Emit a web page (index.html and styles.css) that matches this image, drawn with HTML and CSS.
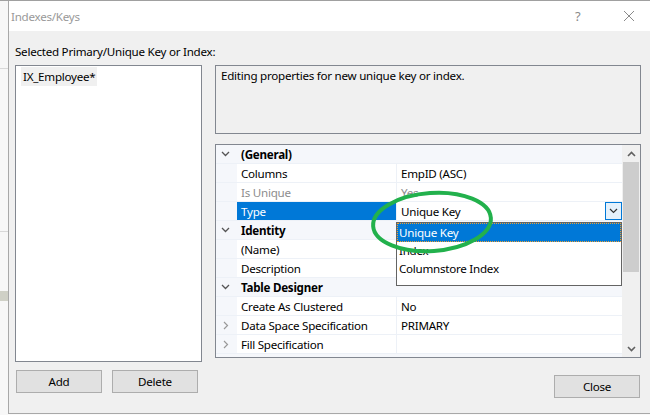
FILE: index.html
```html
<!DOCTYPE html>
<html>
<head>
<meta charset="utf-8">
<link rel="stylesheet" href="styles.css">
</head>
<body>
<div class="screen">
  <div class="bgstrip">
    <div class="bgline l1"></div>
    <div class="bgline l2"></div>
    <div class="bgline l3"></div>
  </div>
  <div class="window">
    <div class="titlebar">
      <span class="title">Indexes/Keys</span>
      <span class="tb-help">?</span>
      <span class="tb-close"><svg width="12" height="12" viewBox="0 0 12 12"><path d="M1 1 L11 11 M11 1 L1 11" stroke="#8a8a8a" stroke-width="1" fill="none"/></svg></span>
    </div>
    <div class="client">
      <div class="label">Selected Primary/Unique Key or Index:</div>
      <div class="main">
        <div class="leftcol">
          <div class="listbox">
            <div class="item">IX_Employee*</div>
          </div>
          <div class="btnrow">
            <div class="btn">Add</div>
            <div class="btn">Delete</div>
          </div>
        </div>
        <div class="rightcol">
          <div class="info">Editing properties for new unique key or index.</div>
          <div class="grid">
            <div class="rows">
              <div class="row header"><div class="gut"><svg class="chev" width="9" height="6" viewBox="0 0 9 6"><path d="M1 1 L4.5 4.5 L8 1" stroke="#555" stroke-width="1.3" fill="none"/></svg></div><div class="hname">(General)</div></div>
              <div class="row"><div class="gut"></div><div class="name">Columns</div><div class="val">EmpID (ASC)</div></div>
              <div class="row"><div class="gut"></div><div class="name ro">Is Unique</div><div class="val ro">Yes</div></div>
              <div class="row"><div class="gut"></div><div class="name sel">Type</div><div class="val">Unique Key<span class="ddbtn"><svg width="9" height="6" viewBox="0 0 9 6"><path d="M1 1 L4.5 4.5 L8 1" stroke="#333" stroke-width="1.2" fill="none"/></svg></span></div></div>
              <div class="row header"><div class="gut"><svg class="chev" width="9" height="6" viewBox="0 0 9 6"><path d="M1 1 L4.5 4.5 L8 1" stroke="#555" stroke-width="1.3" fill="none"/></svg></div><div class="hname">Identity</div></div>
              <div class="row"><div class="gut"></div><div class="name">(Name)</div><div class="val"></div></div>
              <div class="row"><div class="gut"></div><div class="name">Description</div><div class="val"></div></div>
              <div class="row header"><div class="gut"><svg class="chev" width="9" height="6" viewBox="0 0 9 6"><path d="M1 1 L4.5 4.5 L8 1" stroke="#555" stroke-width="1.3" fill="none"/></svg></div><div class="hname">Table Designer</div></div>
              <div class="row"><div class="gut"></div><div class="name">Create As Clustered</div><div class="val">No</div></div>
              <div class="row"><div class="gut"><svg class="chev" width="6" height="9" viewBox="0 0 6 9"><path d="M1 1 L4.5 4.5 L1 8" stroke="#999" stroke-width="1.2" fill="none"/></svg></div><div class="name">Data Space Specification</div><div class="val">PRIMARY</div></div>
              <div class="row"><div class="gut"><svg class="chev" width="6" height="9" viewBox="0 0 6 9"><path d="M1 1 L4.5 4.5 L1 8" stroke="#999" stroke-width="1.2" fill="none"/></svg></div><div class="name">Fill Specification</div><div class="val"></div></div>
            </div>
            <div class="scrollbar">
              <div class="sarrow"><svg width="9" height="6" viewBox="0 0 9 6"><path d="M1 5 L4.5 1.5 L8 5" stroke="#606060" stroke-width="1.6" fill="none"/></svg></div>
              <div class="track"><div class="thumb"></div></div>
              <div class="sarrow"><svg width="9" height="6" viewBox="0 0 9 6"><path d="M1 1 L4.5 4.5 L8 1" stroke="#606060" stroke-width="1.6" fill="none"/></svg></div>
            </div>
            <div class="dropdown">
              <div class="ditem dsel">Unique Key</div>
              <div class="ditem">Index</div>
              <div class="ditem">Columnstore Index</div>
            </div>
          </div>
          <div class="closerow"><div class="btn">Close</div></div>
        </div>
      </div>
    </div>
  </div>
  <svg class="ellipse" width="650" height="415" viewBox="0 0 650 415"><ellipse cx="432" cy="221" rx="59" ry="29" transform="rotate(-4 432 221)" fill="none" stroke="#22b14c" stroke-width="4"/></svg>
</div>
</body>
</html>
```

FILE: styles.css
```css
* { box-sizing: border-box; }
html, body { margin: 0; padding: 0; }
body {
  font-family: "Noto Sans", "Open Sans", sans-serif;
  font-size: 11.6px;
  letter-spacing: -0.25px;
  color: #000;
  background: #fff;
}
.screen {
  position: relative;
  width: 650px;
  height: 415px;
  overflow: hidden;
  display: flex;
  border-top: 1px solid #a0a0a0;
  background: #fafafa;
}
.bgstrip {
  width: 8px;
  flex: none;
  position: relative;
  background: #f7f7f7;
}
.bgline { position: absolute; left: 0; width: 8px; height: 1px; background: #d8d8d8; }
.l1 { top: 67px; }
.l2 { top: 230px; }
.l3 { top: 290px; height: 10px; background: #cfd0c6; }
.window {
  flex: 1;
  height: 413px;
  border-left: 1px solid #a8a8a8;
  border-bottom: 1px solid #a8a8a8;
  background: #f0f0f0;
  display: flex;
  flex-direction: column;
}
.titlebar {
  height: 30px;
  background: #fff;
  display: flex;
  align-items: center;
  color: #999;
}
.title { padding-left: 2px; flex: 1; }
.tb-help { width: 12px; margin-right: 36px; color: #8a8a8a; font-size: 13px; }
.tb-close { width: 12px; height: 12px; margin-right: 15px; display: flex; }
.client {
  padding: 13px 9px 0 6px;
}
.label {
  height: 16px;
  line-height: 16px;
  margin-bottom: 5px;
  white-space: nowrap;
}
.main {
  display: flex;
  gap: 13px;
}
.leftcol {
  width: 187px;
  display: flex;
  flex-direction: column;
}
.listbox {
  height: 297px;
  background: #fff;
  border: 1px solid #828790;
  padding: 1px 0 0 5px;
}
.item {
  display: inline-block;
  background: #f0f0f0;
  height: 19px;
  line-height: 19px;
  padding: 0 2px 0 2px;
}
.btnrow {
  margin-top: 8px;
  margin-left: 1px;
  display: flex;
  gap: 10px;
}
.btn {
  width: 86px;
  height: 23px;
  line-height: 21px;
  text-align: center;
  background: #e1e1e1;
  border: 1px solid #adadad;
}
.rightcol {
  width: 426px;
  display: flex;
  flex-direction: column;
}
.info {
  height: 69px;
  border: 1px solid #828790;
  background: #f0f0f0;
  padding: 2px 5px;
  line-height: 16px;
}
.grid {
  margin-top: 10px;
  height: 214px;
  border: 1px solid #828790;
  background: #f5f7fb;
  display: flex;
  position: relative;
}
.rows {
  width: 406px;
  display: flex;
  flex-direction: column;
}
.row {
  height: 19px;
  display: flex;
  border-bottom: 1px solid #edf1f7;
}
.row .gut {
  width: 21px;
  flex: none;
  display: flex;
  align-items: center;
  justify-content: center;
  padding-right: 2px;
}
.name {
  width: 160px;
  flex: none;
  background: #fff;
  padding-left: 4px;
  line-height: 19px;
  border-right: 1px solid #edf1f7;
  white-space: nowrap;
}
.name.sel { background: #0078d7; color: #fff; }
.ro { color: #8d8d8d; }
.val {
  flex: 1;
  background: #fff;
  padding-left: 4px;
  line-height: 19px;
  position: relative;
  white-space: nowrap;
}
.hname {
  flex: 1;
  padding-left: 4px;
  font-weight: bold;
  line-height: 19px;
}
.ddbtn {
  position: absolute;
  right: 0;
  top: 0;
  width: 17px;
  height: 18px;
  border: 1px solid #0078d7;
  background: #e5f1fb;
  display: flex;
  align-items: center;
  justify-content: center;
}
.scrollbar {
  flex: 1;
  display: flex;
  flex-direction: column;
  background: #f0f0f0;
}
.sarrow {
  height: 17px;
  display: flex;
  align-items: center;
  justify-content: center;
  flex: none;
}
.track { flex: 1; padding: 0 1px; }
.thumb { height: 110px; background: #cdcdcd; }
.dropdown {
  position: absolute;
  left: 180px;
  top: 77px;
  width: 226px;
  height: 64px;
  border: 1px solid #646464;
  background: #fff;
}
.ditem {
  height: 18px;
  line-height: 18px;
  padding-left: 2px;
  white-space: nowrap;
}
.ditem.dsel {
  height: 19px;
  line-height: 17px;
  background: #0078d7;
  color: #fff;
  border: 1px dotted #f0a030;
  padding-left: 1px;
}
.closerow {
  margin-top: 17px;
  display: flex;
  justify-content: flex-end;
  padding-right: 1px;
}
.ellipse {
  position: absolute;
  left: 0;
  top: 0;
  pointer-events: none;
}
```
